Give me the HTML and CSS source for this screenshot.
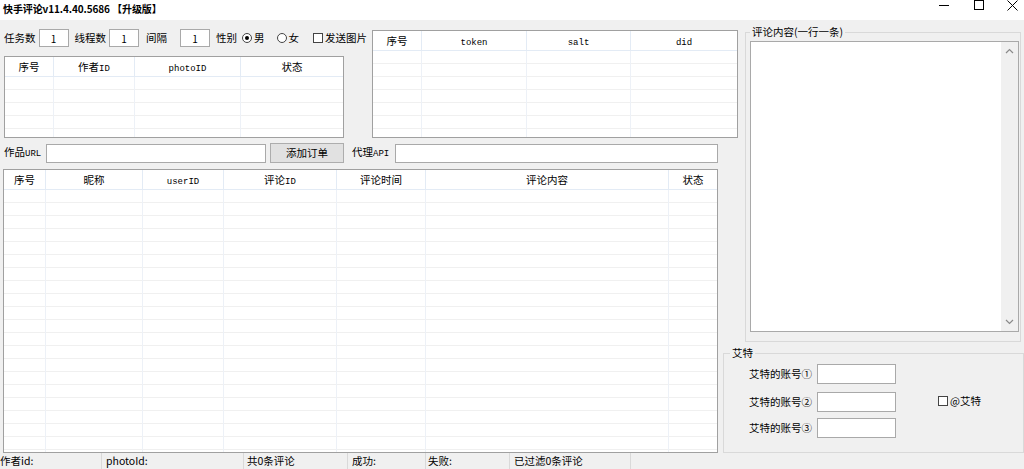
FILE: index.html
```html
<!DOCTYPE html>
<html lang="zh-CN">
<head>
<meta charset="utf-8">
<title>快手评论</title>
<link rel="stylesheet" href="styles.css">
</head>
<body>
<div class="titlebar">
  <div class="title">快手评论v11.4.40.5686 【升级版】</div>
  <div class="winctrls">
    <svg class="wc wc-min" width="10" height="10" viewBox="0 0 10 10"><path d="M0 5.5H10" stroke="#000" stroke-width="1"/></svg>
    <svg class="wc wc-max" width="10" height="10" viewBox="0 0 10 10"><rect x="0.5" y="0.5" width="9" height="9" fill="none" stroke="#000" stroke-width="1"/></svg>
    <svg class="wc wc-close" width="11" height="11" viewBox="0 0 11 11"><path d="M0.5 0.5L10.5 10.5M10.5 0.5L0.5 10.5" stroke="#000" stroke-width="1"/></svg>
  </div>
</div>
<div class="client">
  <div class="left">
    <div class="top">
      <div class="top-left">
        <div class="controls">
          <span class="lbl">任务数</span>
          <input class="box num n1" value="1">
          <span class="lbl l2">线程数</span>
          <input class="box num n2" value="1">
          <span class="lbl l3">间隔</span>
          <input class="box num n3" value="1">
          <span class="lbl l4">性别</span>
          <span class="radio on r1"></span><span class="rtxt">男</span>
          <span class="radio r2"></span><span class="rtxt">女</span>
          <span class="chk c1"></span><span class="rtxt">发送图片</span>
        </div>
        <div class="grid t1">
          <div class="thead">
            <div class="th">序号</div><div class="th">作者<span class="en">ID</span></div><div class="th"><span class="en">photoID</span></div><div class="th">状态</div>
          </div>
          <div class="tbody">
            <div class="td"></div><div class="td"></div><div class="td"></div><div class="td"></div>
          </div>
        </div>
      </div>
      <div class="grid t2">
        <div class="thead">
          <div class="th">序号</div><div class="th"><span class="en">token</span></div><div class="th"><span class="en">salt</span></div><div class="th"><span class="en">did</span></div>
        </div>
        <div class="tbody">
          <div class="td"></div><div class="td"></div><div class="td"></div><div class="td"></div>
        </div>
      </div>
    </div>
    <div class="row2">
      <span class="lbl lurl">作品<span class="en">URL</span></span>
      <input class="box inurl">
      <button class="btn">添加订单</button>
      <span class="lbl lapi">代理<span class="en">API</span></span>
      <input class="box inapi">
    </div>
    <div class="grid t3">
      <div class="thead">
        <div class="th">序号</div><div class="th">昵称</div><div class="th"><span class="en">userID</span></div><div class="th">评论<span class="en">ID</span></div><div class="th">评论时间</div><div class="th">评论内容</div><div class="th">状态</div>
      </div>
      <div class="tbody">
        <div class="td"></div><div class="td"></div><div class="td"></div><div class="td"></div><div class="td"></div><div class="td"></div><div class="td"></div>
      </div>
    </div>
  </div>
  <div class="right">
    <fieldset class="grp g-comment">
      <legend>评论内容(一行一条)</legend>
      <div class="ta">
        <div class="ta-body"></div>
        <div class="vscroll">
          <svg width="9" height="6" viewBox="0 0 9 6"><path d="M1 5L4.5 1.5L8 5" fill="none" stroke="#8a8a8a" stroke-width="1.2"/></svg>
          <svg width="9" height="6" viewBox="0 0 9 6"><path d="M1 1L4.5 4.5L8 1" fill="none" stroke="#8a8a8a" stroke-width="1.2"/></svg>
        </div>
      </div>
    </fieldset>
    <fieldset class="grp g-at">
      <legend>艾特</legend>
      <div class="at-body">
        <div class="at-rows">
          <div class="at-row"><span class="at-lbl">艾特的账号①</span><span class="box at-in"></span></div>
          <div class="at-row ar2"><span class="at-lbl">艾特的账号②</span><span class="box at-in"></span></div>
          <div class="at-row ar3"><span class="at-lbl">艾特的账号③</span><span class="box at-in"></span></div>
        </div>
        <div class="at-chk"><span class="chk"></span><span class="rtxt">@艾特</span></div>
      </div>
    </fieldset>
  </div>
</div>
<div class="statusbar">
  <div class="sp sp1">作者id:</div>
  <div class="sp sp2">photoId:</div>
  <div class="sp sp3">共0条评论</div>
  <div class="sp sp4">成功:</div>
  <div class="sp sp5">失败:</div>
  <div class="sp sp6">已过滤0条评论</div>
</div>
</body>
</html>
```
FILE: styles.css
```css
* { box-sizing: border-box; }
html, body { margin: 0; padding: 0; }
body {
  width: 1024px;
  height: 469px;
  overflow: hidden;
  background: #f0f0f0;
  color: #000;
  font-family: "Noto Sans CJK SC", "Microsoft YaHei", sans-serif;
  font-size: 10.5px;
  line-height: 14px;
}
.en { font-family: "Liberation Mono", "Noto Sans CJK SC", monospace; font-size: 9px; }

/* title bar */
.titlebar {
  height: 20px;
  background: #fff;
  display: flex;
  justify-content: space-between;
  align-items: flex-start;
}
.title { font-weight: bold; font-size: 10px; line-height: 14px; padding: 2px 0 0 3px; letter-spacing: -0.1px; }
.winctrls { display: flex; align-items: flex-start; padding-right: 6px; }
.wc { display: block; }
.wc-max { margin-left: 25px; }
.wc-close { margin-left: 23px; }

/* client */
.client { display: flex; height: 433px; }
.left { width: 720px; flex: none; padding-left: 3px; }
.top { display: flex; width: 740px; }
.top-left { width: 341px; flex: none; padding-left: 1px; }

.controls { display: flex; align-items: center; height: 18px; margin-top: 9px; white-space: nowrap; }
.lbl { flex: none; }
.box {
  display: block;
  border: 1px solid #a9a9a9;
  background: #fff;
  padding: 0;
  margin: 0;
  font: inherit;
  outline: none;
}
.num { width: 30px; height: 18px; text-align: center; font-size: 10px; }
.n1 { margin-left: 3px; }
.l2 { margin-left: 6px; }
.n2 { margin-left: 3px; }
.l3 { margin-left: 7px; }
.n3 { margin-left: 13px; }
.l4 { margin-left: 6px; }
.radio {
  flex: none;
  width: 10px; height: 10px;
  border: 1px solid #444;
  border-radius: 50%;
  background: #fff;
  display: inline-flex; align-items: center; justify-content: center;
}
.radio.on::after { content: ""; width: 4px; height: 4px; border-radius: 50%; background: #000; }
.r1 { margin-left: 5px; }
.r2 { margin-left: 12px; }
.rtxt { margin-left: 2px; }
.chk { flex: none; width: 10px; height: 10px; border: 1px solid #444; background: #fff; display: inline-block; }
.c1 { margin-left: 14px; }

/* grids */
.grid { border: 1px solid #a0a0a0; background: #fff; display: flex; flex-direction: column; }
.thead, .tbody { display: grid; }
.thead { height: 20px; border-bottom: 1px solid #e3ebf5; flex: none; }
.tbody {
  flex: 1;
  background: repeating-linear-gradient(to bottom, #fff 0, #fff 12px, #f0f0f0 12px, #f0f0f0 13px);
}
.th { text-align: center; line-height: 19px; border-right: 1px solid #e3ebf5; white-space: nowrap; overflow: hidden; }
.td { border-right: 1px solid #edf1f7; }
.th:last-child, .td:last-child { border-right: none; }

.t1 { width: 340px; height: 82px; margin-top: 9px; }
.t1 .thead, .t1 .tbody { grid-template-columns: 49px 81px 106px 1fr; }
.t2 { width: 366px; height: 108px; margin-top: 10px; margin-left: 28px; flex: none; }
.t2 .thead, .t2 .tbody { grid-template-columns: 49px 105px 104px 1fr; }
.t3 { width: 715px; height: 284px; margin-top: 6px; }
.t3 .thead, .t3 .tbody { grid-template-columns: 42px 97px 81px 113px 89px 243px 1fr; }

/* row 2 */
.row2 { display: flex; align-items: center; height: 20px; margin-top: 5px; padding-left: 1px; white-space: nowrap; }
.lurl { width: 42px; }
.inurl { width: 220px; height: 19px; }
.btn {
  margin: 0 0 0 4px;
  width: 74px; height: 20px;
  background: #e1e1e1;
  border: 1px solid #adadad;
  padding: 0;
  font: inherit;
  color: #000;
}
.lapi { margin-left: 8px; width: 43px; }
.inapi { width: 323px; height: 19px; }

/* right column */
.right { flex: 1; display: flex; flex-direction: column; }
fieldset.grp { margin: 0; border: 1px solid #d9d9d9; min-width: 0; }
fieldset.grp legend { padding: 0 2px; line-height: 14px; }
.g-comment { margin: 5px 3px 0 25px !important; padding: 2px 1px 9px 4px; }
.ta { display: flex; height: 291px; border: 1px solid #a9a9a9; background: #fff; }
.ta-body { flex: 1; }
.vscroll {
  width: 17px; flex: none;
  background: #f0f0f0;
  display: flex; flex-direction: column; justify-content: space-between; align-items: center;
  padding: 6px 0 6px;
}
.vscroll svg { display: block; }
.g-at { margin: 4px 0 0 3px !important; padding: 4px 0 0 6px; height: 108px; }
.at-body { display: flex; align-items: center; margin-left: 19px; }
.at-row { display: flex; align-items: center; height: 20px; }
.ar2 { margin-top: 8px; }
.ar3 { margin-top: 6px; }
.at-lbl { width: 68px; }
.at-in { width: 79px; height: 20px; }
.at-chk { display: flex; align-items: center; margin-left: 42px; }

/* status bar */
.statusbar { display: flex; height: 16px; font-size: 10.5px; line-height: 15px; white-space: nowrap; }
.sp { border-right: 1px solid #d9d9d9; padding-left: 4px; height: 16px; }
.sp1 { width: 102px; padding-left: 0; }
.sp2 { width: 142px; }
.sp3 { width: 104px; padding-left: 3px; }
.sp4 { width: 78px; }
.sp5 { width: 84px; padding-left: 2px; }
.sp6 { width: 121px; }
```
